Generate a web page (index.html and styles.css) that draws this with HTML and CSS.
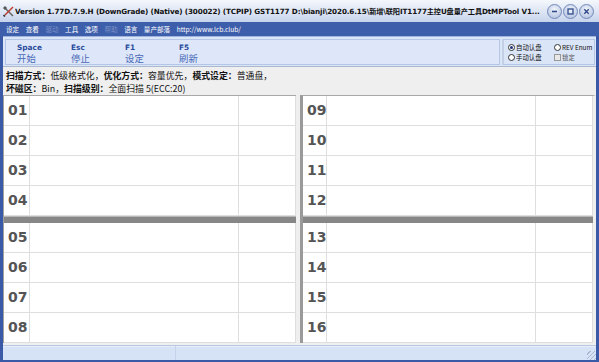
FILE: index.html
```html
<!DOCTYPE html>
<html lang="zh">
<head>
    <meta charset="UTF-8">
    <title>DtMPTool</title>
    <link rel="stylesheet" href="styles.css">
</head>
<body>
<div class="window">
    <!-- Title bar -->
    <div class="titlebar">
        <svg class="app-icon" width="11" height="11" viewBox="0 0 11 11">
            <path d="M1.5 1.5 L10 10" stroke="#666" stroke-width="1.5"/>
            <path d="M10 1 L2 9" stroke="#c0392b" stroke-width="1.5"/>
            <path d="M0 2 L2 0 L4 2 L2 4 Z" fill="#555"/>
            <path d="M0.5 9 L2 10.5" stroke="#333" stroke-width="1.6"/>
        </svg>
        <div class="title">Version 1.77D.7.9.H (DownGrade) (Native) (300022) (TCPIP) GST1177 D:\bianji\2020.6.15\新增\联阳IT1177主控U盘量产工具DtMPTool V1...</div>
        <div class="win-btns">
            <span class="win-btn">
                <svg width="13" height="13" viewBox="0 0 13 13"><path d="M4 6.5 H9" stroke="#2f4a8a" stroke-width="1.6"/></svg>
            </span>
            <span class="win-btn">
                <svg width="13" height="13" viewBox="0 0 13 13"><rect x="4" y="4" width="5" height="5" fill="none" stroke="#2f4a8a" stroke-width="1.3"/></svg>
            </span>
            <span class="win-btn">
                <svg width="13" height="13" viewBox="0 0 13 13"><path d="M4.3 4.3 L8.7 8.7 M8.7 4.3 L4.3 8.7" stroke="#2f4a8a" stroke-width="1.4"/></svg>
            </span>
        </div>
    </div>

    <!-- Menu -->
    <div class="menubar">
        <span>设定</span>
        <span>查看</span>
        <span class="off">驱动</span>
        <span>工具</span>
        <span>选项</span>
        <span class="off">帮助</span>
        <span>语言</span>
        <span>量产部落</span>
        <span>http://www.lcb.club/</span>
    </div>

    <div class="body">
        <!-- Toolbar -->
        <div class="toolbar">
            <div class="keys">
                <div class="key"><b>Space</b><span>开始</span></div>
                <div class="key"><b>Esc</b><span>停止</span></div>
                <div class="key"><b>F1</b><span>设定</span></div>
                <div class="key"><b>F5</b><span>刷新</span></div>
            </div>
            <div class="opts">
                <label class="opt"><i class="radio on"></i>自动认盘</label>
                <label class="opt"><i class="radio"></i>REV Enum</label>
                <label class="opt"><i class="radio"></i>手动认盘</label>
                <label class="opt dim"><i class="check"></i>锁定</label>
            </div>
        </div>

        <!-- Scan info -->
        <div class="info">
            <p><b>扫描方式：</b>低级格式化，<b>优化方式：</b>容量优先，<b>模式设定：</b>普通盘，</p>
            <p><b>坏磁区：</b>Bin，<b>扫描级别：</b>全面扫描 5(ECC:20)</p>
        </div>

        <!-- Port grids -->
        <div class="grids">
            <div class="panel">
                <div class="row"><div class="num">01</div><div></div><div></div></div>
                <div class="row"><div class="num">02</div><div></div><div></div></div>
                <div class="row"><div class="num">03</div><div></div><div></div></div>
                <div class="row"><div class="num">04</div><div></div><div></div></div>
                <div class="sep"></div>
                <div class="row"><div class="num">05</div><div></div><div></div></div>
                <div class="row"><div class="num">06</div><div></div><div></div></div>
                <div class="row"><div class="num">07</div><div></div><div></div></div>
                <div class="row"><div class="num">08</div><div></div><div></div></div>
            </div>
            <div class="panel right">
                <div class="row"><div class="num">09</div><div></div><div></div></div>
                <div class="row"><div class="num">10</div><div></div><div></div></div>
                <div class="row"><div class="num">11</div><div></div><div></div></div>
                <div class="row"><div class="num">12</div><div></div><div></div></div>
                <div class="sep"></div>
                <div class="row"><div class="num">13</div><div></div><div></div></div>
                <div class="row"><div class="num">14</div><div></div><div></div></div>
                <div class="row"><div class="num">15</div><div></div><div></div></div>
                <div class="row"><div class="num">16</div><div></div><div></div></div>
            </div>
        </div>

        <!-- Status bar -->
        <div class="status">
            <div class="cell first"></div>
            <div class="cell grow"><span class="grip"></span></div>
        </div>
    </div>
</div>
</body>
</html>
```

FILE: styles.css
```css
/* General */
body {
    margin: 0;
    font-family: "DejaVu Sans", "Noto Sans CJK SC", sans-serif;
    background: #3a5aa8;
}

.window {
    width: 599px;
    height: 362px;
    display: flex;
    flex-direction: column;
    background: #3a5aa8;
    overflow: hidden;
}

/* Title bar */
.titlebar {
    height: 22px;
    display: flex;
    align-items: center;
    background: linear-gradient(#f4f7fc, #dae3f3 60%, #c6d3ec);
    padding-left: 3px;
    box-sizing: border-box;
}

.app-icon {
    flex: none;
    margin-right: 1px;
}

.title {
    flex: 1;
    font-size: 7.2px;
    font-weight: bold;
    color: #111;
    white-space: nowrap;
    overflow: hidden;
    letter-spacing: -0.12px;
}

.win-btns {
    display: flex;
    gap: 1px;
    padding: 0 5px 0 4px;
}

.win-btn {
    width: 15px;
    height: 15px;
    border-radius: 50%;
    border: 1px solid #7489b9;
    background: radial-gradient(circle at 50% 35%, #f2f5fb, #a8badd);
    box-sizing: border-box;
    display: flex;
    align-items: center;
    justify-content: center;
}

/* Menu */
.menubar {
    height: 14px;
    display: flex;
    align-items: center;
    gap: 6.5px;
    padding-left: 6px;
    font-family: "Noto Sans CJK SC", sans-serif;
    font-size: 6.6px;
    color: #fff;
    background: #3d5eab;
}

.menubar .off {
    color: #7b90c4;
}

/* Main area */
.body {
    flex: 1;
    display: flex;
    flex-direction: column;
    margin: 0 3px 2px 3px;
    background: #efefef;
}

.toolbar {
    height: 31px;
    display: flex;
    gap: 2px;
    padding: 2px 1px 1px 2px;
    box-sizing: border-box;
    background: #dbe5f8;
    border-top: 1px solid #9fb4dc;
    border-bottom: 1px solid #aab8d0;
}

.keys {
    flex: 1;
    display: flex;
    padding-left: 11px;
    border: 1px solid #b4c5e6;
    background: #dde7f9;
}

.key {
    width: 54px;
    display: flex;
    flex-direction: column;
    padding-top: 3px;
}

.key b {
    font-size: 7.4px;
    color: #2a4b9b;
    line-height: 9px;
}

.key span {
    font-family: "Noto Sans CJK SC", sans-serif;
    font-size: 9.4px;
    color: #4a69b6;
    line-height: 12px;
}

.opts {
    width: 86px;
    display: grid;
    grid-template-columns: 46px 1fr;
    align-content: center;
    row-gap: 1px;
    padding-left: 4px;
    border: 1px solid #b4c5e6;
    border-left: 2px solid #c3cfe4;
}

.opt {
    display: flex;
    align-items: center;
    gap: 1px;
    font-family: "Noto Sans CJK SC", sans-serif;
    font-size: 6.4px;
    color: #111;
    white-space: nowrap;
    line-height: 9px;
}

.opt.dim {
    color: #555;
}

.radio {
    width: 7px;
    height: 7px;
    border: 1px solid #333;
    border-radius: 50%;
    background: #fff;
    box-sizing: border-box;
    position: relative;
}

.radio.on::after {
    content: "";
    position: absolute;
    left: 1px;
    top: 1px;
    width: 3px;
    height: 3px;
    border-radius: 50%;
    background: #1b2f80;
}

.check {
    width: 7px;
    height: 7px;
    border: 1px solid #999;
    background: #e8e8e8;
    box-sizing: border-box;
}

/* Scan info */
.info {
    height: 28px;
    padding: 2px 0 0 3px;
    box-sizing: border-box;
    font-family: "Noto Sans CJK SC", sans-serif;
    font-size: 8.9px;
    color: #111;
}

.info p {
    margin: 0;
    height: 13px;
    line-height: 13px;
}

/* Port grids */
.grids {
    display: flex;
    gap: 4px;
}

.panel {
    width: 293px;
    background: #fff;
    border-top: 1px solid #a8a8a8;
    border-left: 1px solid #a0a0a0;
    box-sizing: border-box;
}

.panel.right {
    width: 296px;
    border-left: 3px solid #9a9a9a;
    border-right: 3px solid #efefef;
}

.row {
    display: grid;
    grid-template-columns: 26px 209px 1fr;
    height: 30px;
}

.right .row {
    grid-template-columns: 24px 209px 1fr;
}

.row > div {
    border-right: 1px solid #dedede;
    border-bottom: 1px solid #dedede;
    box-sizing: border-box;
}

.num {
    font-size: 14px;
    font-weight: bold;
    color: #555;
    line-height: 29px;
    padding-left: 4px;
}

.sep {
    height: 7px;
    background: #878787;
    border-top: 1px solid #b8b8b8;
    box-sizing: border-box;
}

/* Status bar */
.status {
    margin-top: auto;
    height: 14px;
    display: flex;
    gap: 1px;
    background: #c4d2ea;
    border-top: 1px solid #b9c8e2;
}

.cell {
    background: #d6e3f7;
    border-top: 1px solid #e8eef9;
}

.cell.first {
    width: 172px;
}

.cell.grow {
    flex: 1;
    display: flex;
    justify-content: flex-end;
    align-items: flex-end;
}

.grip {
    width: 9px;
    height: 9px;
    background: repeating-linear-gradient(135deg, transparent 0 2px, #a9b7cf 2px 3px);
}
```
